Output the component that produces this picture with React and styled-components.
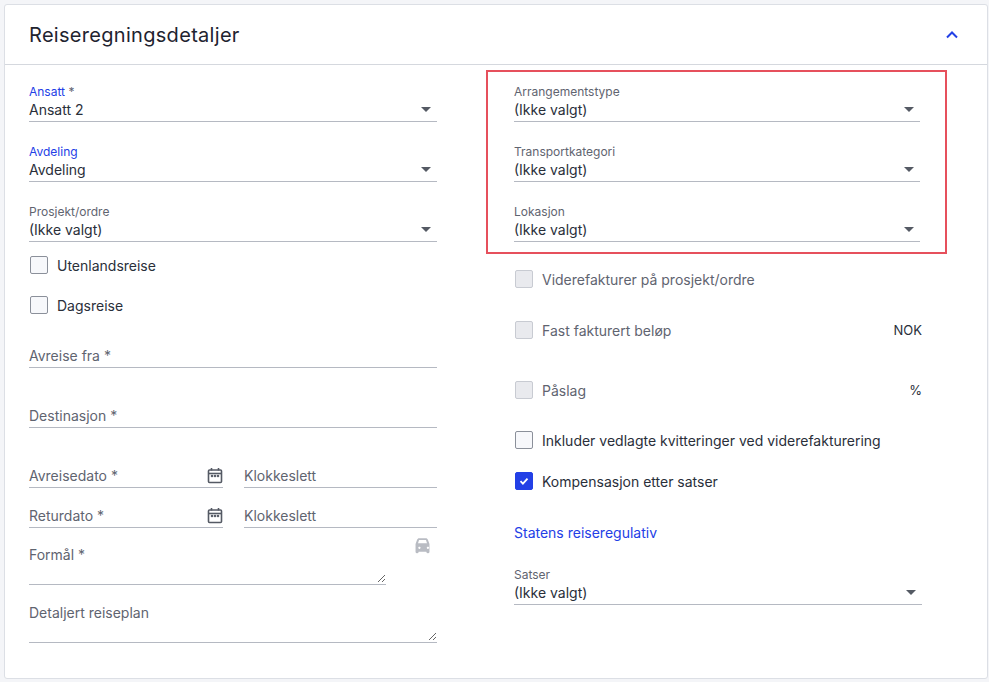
import React from "react";
import styled, { createGlobalStyle } from "styled-components";

const Global = createGlobalStyle`
  html, body { margin: 0; padding: 0; background: #f4f5f8; }
  body { font-family: Inter, "Open Sans", sans-serif; color: #1f2430; }
  * { box-sizing: border-box; }
`;

const Page = styled.div`padding: 4px 1px 4px 4px; width: 989px; height: 682px;`;
const Card = styled.div`
  background: #fff; border: 1px solid #dcdfe5; border-radius: 3px; height: 675px;
`;
const Header = styled.div`
  height: 60px; border-bottom: 1px solid #d5d8de; display: flex; align-items: center;
  justify-content: space-between; padding: 0 28px 0 24px;
`;
const Title = styled.h1`margin: 0; font-size: 20px; font-weight: 400; letter-spacing: 0.3px; color: #1f2430;`;
const Body = styled.div`display: flex; padding: 0 0 0 24px; gap: 49px;`;
const LeftCol = styled.div`width: 408px; display: flex; flex-direction: column;`;
const RightCol = styled.div`width: 461px; display: flex; flex-direction: column;`;

const Block = styled.div`
  height: ${p => p.h}px; display: flex; flex-direction: column; justify-content: flex-end;
  padding-bottom: ${p => (p.pb ?? 3)}px;
`;
const Label = styled.div`font-size: 12px; line-height: 14px; margin-bottom: 1px; color: ${p => (p.active ? "#2340e6" : "#5f6470")};`;
const Star = styled.span`color: #5f6470;`;
const Control = styled.div`
  display: flex; align-items: center; justify-content: space-between;
  border-bottom: 1px solid #b5b9c2; height: ${p => p.h || 22}px; padding-bottom: 3px; font-size: 14px; color: #2a2f3a;
  width: ${p => p.w || "100%"};
  ${p => p.muted && "color: #5f6470;"}
`;
const Caret = styled.span`
  width: 0; height: 0; border-left: 5px solid transparent; border-right: 5px solid transparent;
  border-top: 5px solid #555a64; margin-right: 6px;
`;

const Select = ({ label, value, active, req, h = 60 }) => (
  <Block h={h}>
    <Label active={active}>{label}{req && <Star> *</Star>}</Label>
    <Control><span>{value}</span><Caret /></Control>
  </Block>
);

const CheckRow = styled.label`
  height: ${p => p.h}px; display: flex; align-items: center; gap: 9px; font-size: 14px;
  color: ${p => (p.disabled ? "#5f6470" : "#2a2f3a")};
`;
const Box = styled.span`
  width: 18px; height: 18px; border-radius: 2px; display: inline-flex; align-items: center; justify-content: center;
  border: 1px solid ${p => (p.checked ? "#2340e6" : p.disabled ? "#c8cbd2" : "#8b909a")};
  background: ${p => (p.checked ? "#2340e6" : p.disabled ? "#e9eaee" : "#f7f8fb")};
`;
const Check = ({ label, h, disabled, checked, right }) => (
  <CheckRow h={h} disabled={disabled}>
    <Box checked={checked} disabled={disabled}>
      {checked && (
        <svg width="12" height="12" viewBox="0 0 12 12"><path d="M2.5 6.2l2.4 2.4 4.6-5" stroke="#fff" strokeWidth="1.8" fill="none" /></svg>
      )}
    </Box>
    <Grow>{label}</Grow>
    {right && <Right>{right}</Right>}
  </CheckRow>
);
const Grow = styled.span`flex: 1;`;
const Right = styled.span`width: 80px; text-align: right; color: #2a2f3a; margin-right: 25px; font-size: 13px;`;
const CheckWrap = styled.div`padding-left: ${p => p.pl || 0}px;`;

const Row = styled.div`display: flex; gap: 21px; align-items: flex-end; height: ${p => p.h}px; padding-bottom: 3px;`;
const Cal = () => (
  <svg width="16" height="17" viewBox="0 0 16 17" fill="none" stroke="#555a64" strokeWidth="1.6">
    <rect x="1.5" y="3" width="13" height="12.5" rx="1" />
    <line x1="1.5" y1="6.5" x2="14.5" y2="6.5" />
    <line x1="4.5" y1="1" x2="4.5" y2="3.5" /><line x1="11.5" y1="1" x2="11.5" y2="3.5" />
    <circle cx="5" cy="9" r="0.5" fill="#555a64" /><circle cx="8" cy="9" r="0.5" fill="#555a64" /><circle cx="11" cy="9" r="0.5" fill="#555a64" />
  </svg>
);

const TextArea = styled.div`
  position: relative; border-bottom: 1px solid #b5b9c2; width: ${p => p.w}px; height: ${p => p.h}px;
  font-size: 14px; color: #5f6470; padding-top: ${p => p.pt}px;
`;
const Grip = styled.svg`position: absolute; right: 1px; bottom: 2px;`;
const Resize = () => (
  <Grip width="8" height="8" viewBox="0 0 8 8" stroke="#666" strokeWidth="1"><line x1="1" y1="8" x2="8" y2="1" /><line x1="5" y1="8" x2="8" y2="5" /></Grip>
);
const FormRow = styled.div`display: flex; height: 58px; align-items: flex-start; padding-bottom: 4px;`;
const CarWrap = styled.div`margin-left: 27px; margin-top: 6px;`;

const Highlight = styled.div`
  margin-top: 5px; border: 2px solid #e6505c; padding: 0 25px 7px 26px; width: 461px;
`;
const Link = styled.a`color: #2340e6; font-size: 14px; text-decoration: none;`;
const LinkRow = styled.div`height: 52px; display: flex; align-items: center; padding-left: 28px;`;
const RightFields = styled.div`padding-left: 28px; width: 436px;`;

export default function App() {
  return (
    <Page>
      <Global />
      <Card>
        <Header>
          <Title>Reiseregningsdetaljer</Title>
          <svg width="14" height="10" viewBox="0 0 14 10"><path d="M2 7.5l5-5 5 5" stroke="#2340e6" strokeWidth="2" fill="none" /></svg>
        </Header>
        <Body>
          <LeftCol>
            <Select label="Ansatt" req active value="Ansatt 2" />
            <Select label="Avdeling" active value="Avdeling" />
            <Select label="Prosjekt/ordre" value="(Ikke valgt)" />
            <CheckWrap pl={1}><Check h={40} label="Utenlandsreise" /></CheckWrap>
            <CheckWrap pl={1}><Check h={40} label="Dagsreise" /></CheckWrap>
            <Block h={46}><Control muted>Avreise fra *</Control></Block>
            <Block h={60}><Control muted>Destinasjon *</Control></Block>
            <Row h={60}>
              <Control muted w="194px">Avreisedato *<Cal /></Control>
              <Control muted w="193px">Klokkeslett</Control>
            </Row>
            <Row h={40}>
              <Control muted w="194px">Returdato *<Cal /></Control>
              <Control muted w="193px">Klokkeslett</Control>
            </Row>
            <FormRow>
              <TextArea w={357} h={54} pt={15}>Formål *<Resize /></TextArea>
              <CarWrap>
                <svg width="19" height="17" viewBox="0 0 24 22" fill="#b9bcc3"><path d="M5 3.5C5.4 2.3 6.4 1.5 7.6 1.5h8.8c1.2 0 2.2.8 2.6 2L21 9v10.5a1.5 1.5 0 0 1-1.5 1.5h-1a1.5 1.5 0 0 1-1.5-1.5V19H7v.5A1.5 1.5 0 0 1 5.5 21h-1A1.5 1.5 0 0 1 3 19.5V9zM6.2 8h11.6l-1.3-4H7.5zM6.5 14a1.5 1.5 0 1 0 0-.01zM17.5 14a1.5 1.5 0 1 0 0-.01z" /></svg>
              </CarWrap>
            </FormRow>
            <TextArea w={408} h={54} pt={15}>Detaljert reiseplan<Resize /></TextArea>
          </LeftCol>
          <RightCol>
            <Highlight>
              <Select h={53} label="Arrangementstype" value="(Ikke valgt)" />
              <Select label="Transportkategori" value="(Ikke valgt)" />
              <Select label="Lokasjon" value="(Ikke valgt)" />
            </Highlight>
            <CheckWrap pl={29}>
              <Check h={50} disabled label="Viderefakturer på prosjekt/ordre" />
              <Check h={52} disabled label="Fast fakturert beløp" right="NOK" />
              <Check h={68} disabled label="Påslag" right="%" />
              <Check h={32} label="Inkluder vedlagte kvitteringer ved viderefakturering" />
              <Check h={50} checked label="Kompensasjon etter satser" />
            </CheckWrap>
            <LinkRow><Link href="#">Statens reiseregulativ</Link></LinkRow>
            <RightFields>
              <Select h={50} label="Satser" value="(Ikke valgt)" />
            </RightFields>
          </RightCol>
        </Body>
      </Card>
    </Page>
  );
}
